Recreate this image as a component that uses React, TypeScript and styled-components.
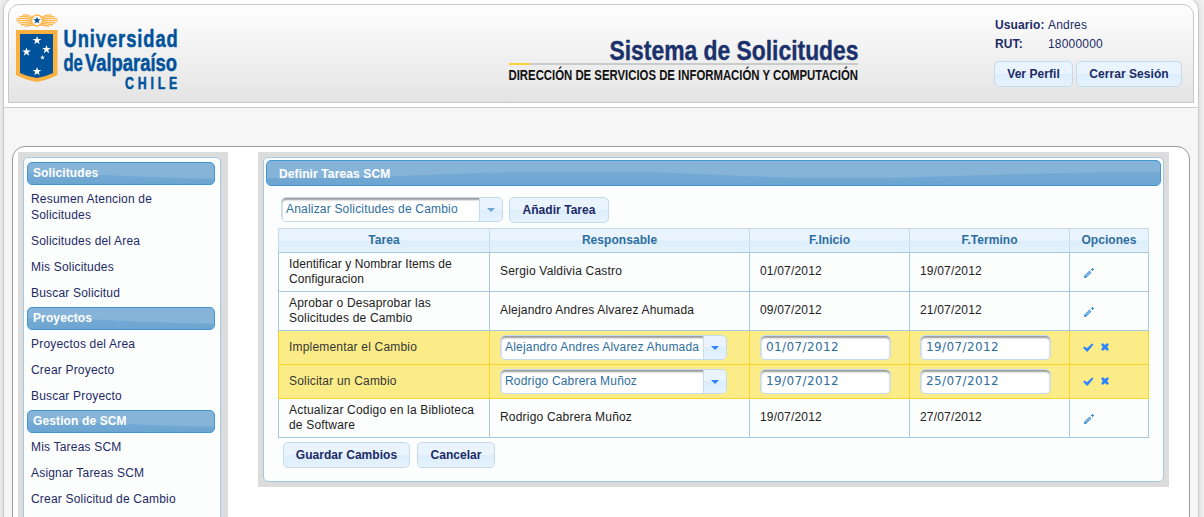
import React from "react";
import styled, { createGlobalStyle, css } from "styled-components";

const Global = createGlobalStyle`
  * { box-sizing: border-box; }
  html, body { margin: 0; height: 517px; overflow: hidden; }
  body {
    background: #f0f0f0;
    font-family: "Liberation Sans", Arial, Helvetica, sans-serif;
    font-size: 12px;
    letter-spacing: 0.19px;
    color: #1c2a66;
  }
`;

const Page = styled.div`
  width: 1196px;
  height: 540px;
  margin: -3px 0 0 3px;
  border: 1px solid #c8c8c8;
  border-radius: 14px 14px 0 0;
  background: #f6f6f6;
  box-shadow: 0 0 6px rgba(0, 0, 0, 0.12);
  overflow: hidden;
`;

const Band = styled.div`
  height: 110px;
  padding: 6px 4px 0;
  margin-bottom: 38px;
  background: #fff;
  border-bottom: 1px solid #ccc;
`;

const Header = styled.header`
  height: 99px;
  display: flex;
  justify-content: space-between;
  border: 1px solid #c6c6c6;
  border-radius: 11px 11px 0 0;
  background: linear-gradient(#fefefe, #e4e4e4);
`;

const TitleSlot = styled.div`
  flex: 1;
  display: flex;
  justify-content: flex-end;
  margin-right: 116px;
`;

const UserBox = styled.div`
  width: 207px;
  padding: 11px 0 0 8px;
`;

const UserLine = styled.div`
  display: flex;
  height: 19px;
  line-height: 19px;
  padding-left: 1px;
  b { width: 53px; letter-spacing: 0.1px; }
`;

const ButtonRow = styled.div<{ $gap: number; $pad?: string }>`
  display: flex;
  gap: ${(p) => p.$gap}px;
  padding: ${(p) => p.$pad || "0"};
`;

const Button = styled.button<{ $w: number }>`
  width: ${(p) => p.$w}px;
  height: 26px;
  padding: 0;
  border: 1px solid #c5dbec;
  border-radius: 5px;
  background: linear-gradient(#e9f4fe 0 50%, #dcedfb 50%, #e6f3fd);
  color: #1c2a66;
  font: bold 12px "Liberation Sans", Arial, sans-serif;
  letter-spacing: 0.05px;
  white-space: nowrap;
`;

const Content = styled.main`
  height: 400px;
  margin: 0 8px;
  padding: 5px;
  display: flex;
  align-items: flex-start;
  gap: 30px;
  background: #fff;
  border: 1px solid #999;
  border-radius: 13px 13px 0 0;
`;

const Frame = styled.div<{ $w: number; $h: number; $pad: string }>`
  width: ${(p) => p.$w}px;
  height: ${(p) => p.$h}px;
  padding: ${(p) => p.$pad};
  background: #dcdcdc;
`;

const Panel = styled.section<{ $pad: string }>`
  height: 100%;
  padding: ${(p) => p.$pad};
  background: #fcfdfd;
  border: 1px solid #a6c9e2;
  border-radius: 5px;
`;

const Bar = styled.div<{ $h: number; $pad: number }>`
  position: relative;
  height: ${(p) => p.$h}px;
  padding-left: ${(p) => p.$pad}px;
  line-height: ${(p) => (p.$h > 23 ? 26 : 20)}px;
  border: 1px solid #4297d7;
  border-radius: 5px;
  background: #86b4d9;
  color: #fff;
  font-weight: bold;
  letter-spacing: 0.12px;
  overflow: hidden;
  svg { position: absolute; left: 0; top: 50%; margin-top: -12px; }
  span { position: relative; }
`;

const MenuBar = styled(Bar)`
  margin: 1px 0;
  &:first-child { margin-top: 0; }
`;

const MenuItem = styled.a`
  display: block;
  width: 160px;
  padding: 5px 4px;
  line-height: 16px;
`;

const Toolbar = styled.div`
  display: flex;
  gap: 6px;
  padding: 11px 0 5px 15px;
`;

const SelectBox = styled.div<{ $w: number }>`
  display: flex;
  width: ${(p) => p.$w}px;
  height: 25px;
  border: 1px solid #c5dbec;
  border-radius: 5px;
  background: #fff;
  box-shadow: inset 0 2px 2px #999;
  color: #2e6e9e;
  overflow: hidden;
`;

const SelectText = styled.span`
  flex: 1;
  padding-left: 4px;
  line-height: 22px;
  white-space: nowrap;
`;

const SelectArrow = styled.span<{ $color: string }>`
  width: 23px;
  border-left: 1px solid #c5dbec;
  background: linear-gradient(#e9f4fe 0 50%, #dcedfb 50%, #e6f3fd);
  display: flex;
  align-items: center;
  justify-content: center;
  color: ${(p) => p.$color};
`;

const Table = styled.table`
  width: 871px;
  margin-left: 12px;
  border-collapse: collapse;
  table-layout: fixed;
  color: #222;
`;

const Th = styled.th`
  height: 24px;
  padding: 0 0 2px;
  border: 1px solid #c5dbec;
  border-bottom-color: #a6c9e2;
  background: linear-gradient(#e9f4fe 0 50%, #dcedfb 50%, #e6f3fd);
  color: #2e6e9e;
  letter-spacing: 0.05px;
`;

const Row = styled.tr<{ $active?: boolean }>`
  height: ${(p) => (p.$active ? 34 : 39)}px;
  ${(p) => p.$active && css`background: #fbec88; color: #363636;`}
  td {
    padding: 0 10px 1px;
    border: 1px solid ${(p) => (p.$active ? "#fad42e" : "#a6c9e2")};
    line-height: 15px;
  }
  td:nth-child(n + 2) { padding-right: 0; }
  ${(p) => p.$active && css`td { padding-bottom: 0; }`}
  &:first-child td:first-child { letter-spacing: 0.07px; }
`;

const DateField = styled.div`
  width: 131px;
  height: 25px;
  padding-left: 5px;
  line-height: 23px;
  border: 1px solid #c5dbec;
  border-radius: 5px;
  background: #fff;
  box-shadow: inset 0 2px 2px #999;
  color: #2e6e9e;
  font-family: "DejaVu Sans", sans-serif;
  letter-spacing: 0.38px;
`;

const IconCell = styled.div<{ $active?: boolean }>`
  display: flex;
  align-items: center;
  gap: 7px;
  padding: ${(p) => (p.$active ? "0 0 1px 3px" : "2px 0 0 4px")};
`;

/* The gloss wave keeps its size and is clipped by the bar; start picks the part that shows. */
const Wave = ({ start = 0 }: { start?: number }) => (
  <svg width="894" height="24" viewBox={`${start} 0 894 24`}>
    <defs>
      <linearGradient id="deep" x1="0" y1="0" x2="0" y2="1">
        <stop offset="0" stopColor="#75abd5" />
        <stop offset="1" stopColor="#6ba4d0" />
      </linearGradient>
    </defs>
    <path d="M0 17C60 18 110 16 180 13C260 10 360 10 410 12C480 15 510 17 580 17C680 17 740 11 894 11V24H0Z" fill="url(#deep)" />
  </svg>
);

const Arrow = () => (
  <svg width="8" height="4" viewBox="0 0 8 4"><path d="M0 0H8L4 4Z" fill="currentColor" /></svg>
);

const Pencil = () => (
  <svg width="10" height="10" viewBox="0 0 10 10">
    <path d="M0 10V8L5.500 2.500L7.500 4.500L2 10Z" fill="#4d9bdc" />
    <path d="M2 8L6 4" stroke="#d5e9f8" strokeWidth=".9" strokeDasharray="1 .5" />
    <path d="M7 1H8V0H9V1H10V2H9V3H8V2H7Z" fill="#3b8fd8" />
  </svg>
);

const Check = () => (
  <svg width="11" height="9" viewBox="0 0 11 9">
    <path d="M0 4.500L1.500 3.500L4 5.300L9 .5L10.500 1.500L4.800 8.500H3.500Z" fill="#2e83ff" />
  </svg>
);

const Cross = () => (
  <svg width="8" height="8" viewBox="0 0 8 8">
    <path d="M.5 .5H2.500L4 2L5.500 .5H7.500V2.500L6 4L7.500 5.500V7.500H5.500L4 6L2.500 7.500H.5V5.500L2 4L.5 2.500Z" fill="#2e83ff" />
  </svg>
);

const STAR = "M0-5L1.200-1.600H4.800L1.900.6L3 4.100L0 2L-3 4.100L-1.900.6L-4.800-1.600H-1.200Z";

const FEATHERS = [
  "M5 -3Q9 -6.500 14.500 -5.300",
  "M5 -2Q12 -5.300 18 -3.500",
  "M5 -.8Q13 -3.200 20.500 -1.500",
  "M5 .4Q12 -.8 20.500 .7",
  "M5 1.700Q11 1.300 18.500 2.700",
  "M5 3Q9 3 16 4.500",
  "M4 4.500Q8 5 12.500 5.900",
];

const Logo = () => (
  <svg width="180" height="90" viewBox="9 5 180 90">
    <g fill="none" stroke="#fcb548" strokeWidth="1.300">
      {FEATHERS.map((d) => <path key={d} d={d} transform="translate(37 20.500)" />)}
      {FEATHERS.map((d) => <path key={d} d={d} transform="translate(37 20.500) scale(-1 1)" />)}
    </g>
    <circle cx="37" cy="20.500" r="5.500" fill="#fff" stroke="#fcb548" strokeWidth="1.500" />
    <path d={STAR} transform="translate(37 20.500) scale(.8)" fill="#00529b" />
    <path d="M16 30H57.500V75Q48 80 37 82Q25 80 16 75Z" fill="#fcb040" />
    <path d="M20 34H53V73Q45 77 37 78Q28 77 20 73Z" fill="#00529b" />
    <g fill="#fff">
      <path d={STAR} transform="translate(37 40.500) scale(.9)" />
      <path d={STAR} transform="translate(26.500 52) scale(.9)" />
      <path d={STAR} transform="translate(46.500 49.500) scale(.9)" />
      <path d={STAR} transform="translate(42.500 57.500) scale(.5)" />
      <path d={STAR} transform="translate(37 71.500) scale(.9)" />
    </g>
    <g fill="#00529b" stroke="#00529b" strokeWidth=".5" letterSpacing="0" fontFamily="Liberation Sans Narrow, Liberation Sans, sans-serif" fontWeight="bold">
      <text transform="translate(63.500 46.700) scale(.78 1)" fontSize="23.500" textLength="146.500">Universidad</text>
      <text transform="translate(63.500 70.700) scale(.84 1)" fontSize="23.500" textLength="23" lengthAdjust="spacingAndGlyphs">de</text>
      <text transform="translate(85 70.700) scale(.84 1)" fontSize="23.500" textLength="109.500" lengthAdjust="spacingAndGlyphs">Valparaíso</text>
      <text transform="translate(125 89) scale(.78 1)" fontSize="15.800" textLength="67">CHILE</text>
    </g>
  </svg>
);

const Title = () => (
  <svg width="374" height="90" viewBox="496 5 374 90" letterSpacing="0" fontFamily="Liberation Sans Narrow, Liberation Sans, sans-serif" fontWeight="bold">
    <text x="609.500" y="60" fontSize="27" fill="#1a316b" stroke="#1a316b" strokeWidth=".4" textLength="249" lengthAdjust="spacingAndGlyphs">Sistema de Solicitudes</text>
    <rect x="509" y="63" width="349" height="2" fill="#cacccb" />
    <rect x="509" y="63" width="21" height="2" fill="#fdd038" />
    <text x="508.500" y="80" fontSize="15" fill="#111" textLength="349.500" lengthAdjust="spacingAndGlyphs">DIRECCIÓN DE SERVICIOS DE INFORMACIÓN Y COMPUTACIÓN</text>
  </svg>
);

const MENU = [
  { title: "Solicitudes", items: ["Resumen Atencion de Solicitudes", "Solicitudes del Area", "Mis Solicitudes", "Buscar Solicitud"] },
  { title: "Proyectos", items: ["Proyectos del Area", "Crear Proyecto", "Buscar Proyecto"] },
  { title: "Gestion de SCM", items: ["Mis Tareas SCM", "Asignar Tareas SCM", "Crear Solicitud de Cambio"] },
];

const TASKS = [
  { name: "Identificar y Nombrar Items de Configuracion", who: "Sergio Valdivia Castro", from: "01/07/2012", to: "19/07/2012" },
  { name: "Aprobar o Desaprobar las Solicitudes de Cambio", who: "Alejandro Andres Alvarez Ahumada", from: "09/07/2012", to: "21/07/2012" },
  { name: "Implementar el Cambio", who: "Alejandro Andres Alvarez Ahumada", from: "01/07/2012", to: "19/07/2012", active: true },
  { name: "Solicitar un Cambio", who: "Rodrigo Cabrera Muñoz", from: "19/07/2012", to: "25/07/2012", active: true },
  { name: "Actualizar Codigo en la Biblioteca de Software", who: "Rodrigo Cabrera Muñoz", from: "19/07/2012", to: "27/07/2012" },
];

const Select = ({ text, w, color }: { text: string; w: number; color: string }) => (
  <SelectBox $w={w}>
    <SelectText>{text}</SelectText>
    <SelectArrow $color={color}><Arrow /></SelectArrow>
  </SelectBox>
);

export default function App() {
  return (
    <>
      <Global />
      <Page>
        <Band>
          <Header>
            <Logo />
            <TitleSlot><Title /></TitleSlot>
            <UserBox>
              <UserLine><b>Usuario:</b>Andres</UserLine>
              <UserLine><b>RUT:</b>18000000</UserLine>
              <ButtonRow $gap={3} $pad="7px 0 0">
                <Button $w={79}>Ver Perfil</Button>
                <Button $w={106}>Cerrar Sesión</Button>
              </ButtonRow>
            </UserBox>
          </Header>
        </Band>
        <Content>
          <Frame $w={210} $h={420} $pad="5px 7px 0 5px">
            <Panel $pad="4px 5px 4px 3px">
              {MENU.map((m) => (
                <React.Fragment key={m.title}>
                  <MenuBar $h={23} $pad={5}><Wave start={355} /><span>{m.title}</span></MenuBar>
                  {m.items.map((t) => <MenuItem key={t}>{t}</MenuItem>)}
                </React.Fragment>
              ))}
            </Panel>
          </Frame>
          <Frame $w={911} $h={335} $pad="5px">
            <Panel $pad="2px">
              <Bar $h={26} $pad={12}><Wave /><span>Definir Tareas SCM</span></Bar>
              <Toolbar>
                <Select text="Analizar Solicitudes de Cambio" w={222} color="#6da8d5" />
                <Button $w={100}>Añadir Tarea</Button>
              </Toolbar>
              <Table>
                <colgroup>
                  <col style={{ width: 211 }} /><col style={{ width: 260 }} /><col style={{ width: 160 }} /><col style={{ width: 160 }} /><col />
                </colgroup>
                <thead>
                  <tr><Th>Tarea</Th><Th>Responsable</Th><Th>F.Inicio</Th><Th>F.Termino</Th><Th>Opciones</Th></tr>
                </thead>
                <tbody>
                  {TASKS.map((t) => (
                    <Row key={t.name} $active={t.active}>
                      <td>{t.name}</td>
                      <td>{t.active ? <Select text={t.who} w={227} color="#2e83ff" /> : t.who}</td>
                      <td>{t.active ? <DateField>{t.from}</DateField> : t.from}</td>
                      <td>{t.active ? <DateField>{t.to}</DateField> : t.to}</td>
                      <td><IconCell $active={t.active}>{t.active ? <><Check /><Cross /></> : <Pencil />}</IconCell></td>
                    </Row>
                  ))}
                </tbody>
              </Table>
              <ButtonRow $gap={7} $pad="4px 0 0 17px">
                <Button $w={127}>Guardar Cambios</Button>
                <Button $w={78}>Cancelar</Button>
              </ButtonRow>
            </Panel>
          </Frame>
        </Content>
      </Page>
    </>
  );
}
